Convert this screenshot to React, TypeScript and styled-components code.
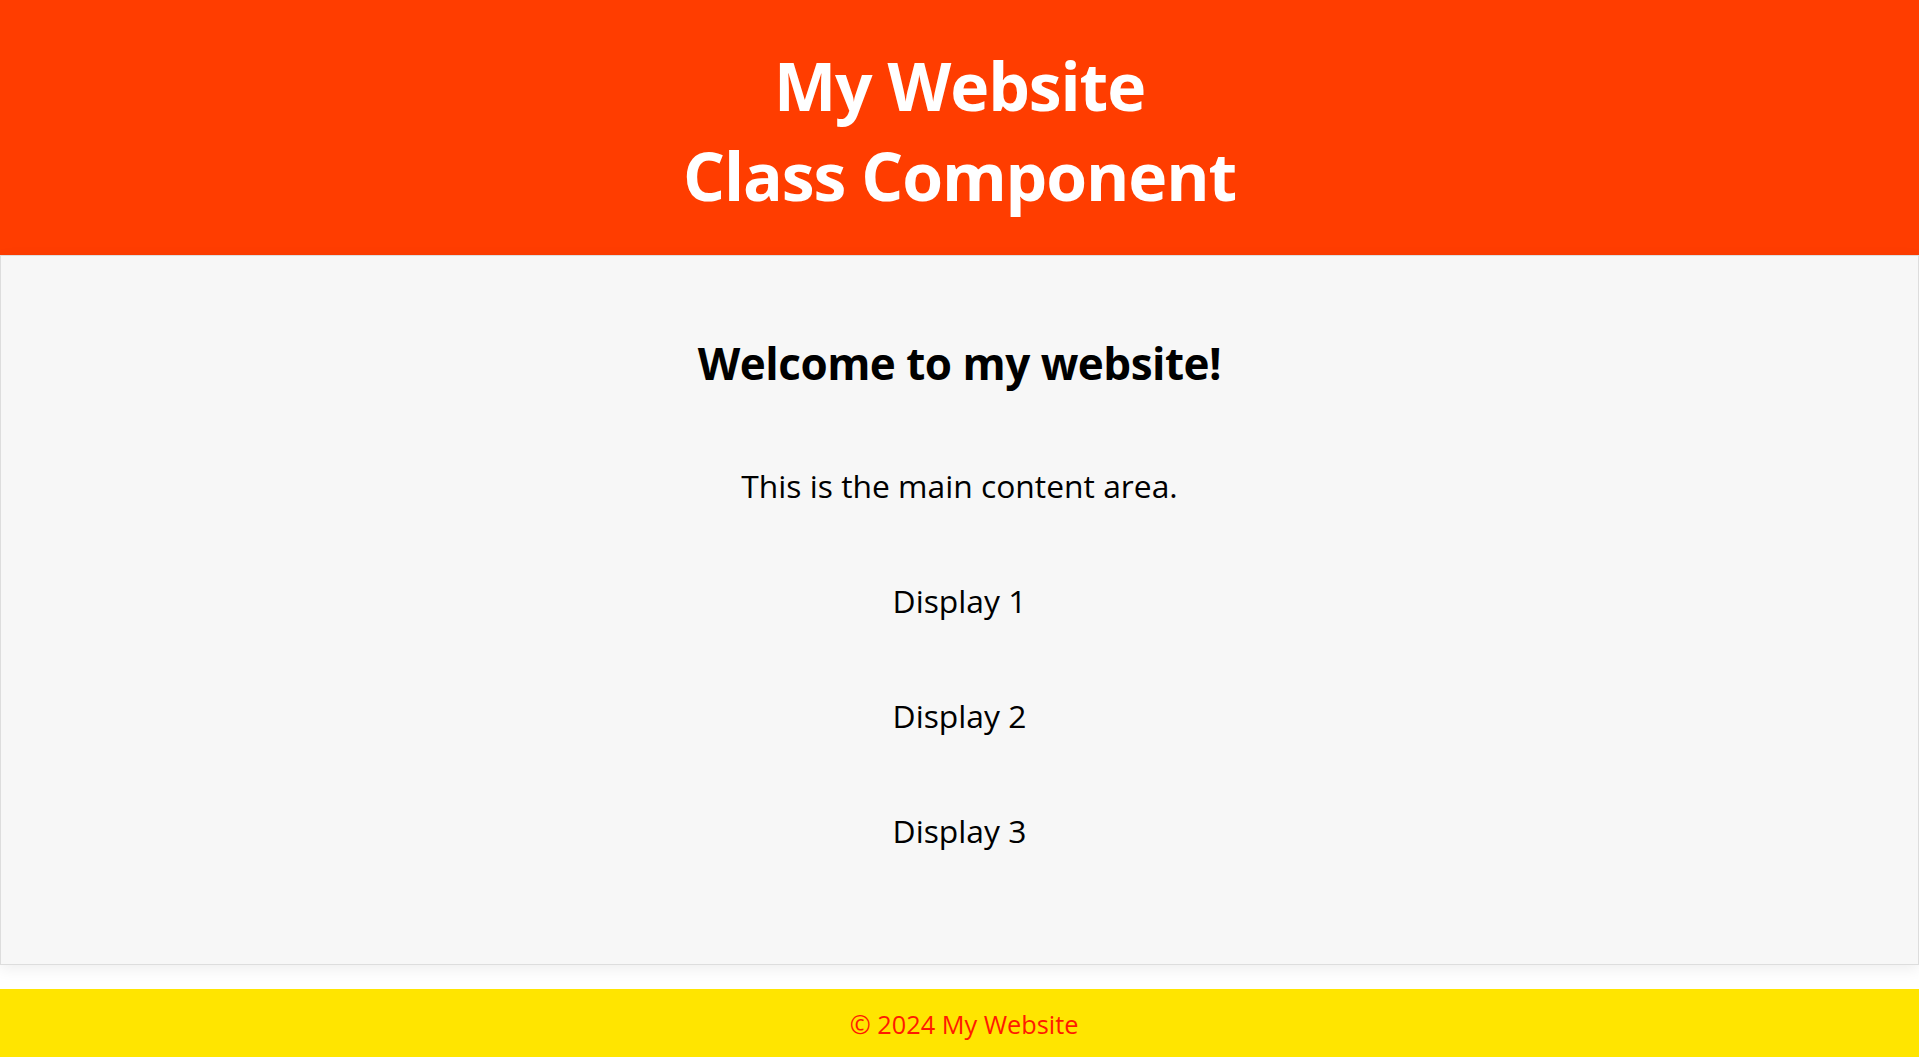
import React from 'react'
import styled, { createGlobalStyle } from 'styled-components'

const GlobalStyle = createGlobalStyle`
  html, body {
    margin: 0;
    padding: 0;
    background: #ffffff;
    font-family: 'Open Sans', 'Noto Sans', sans-serif;
  }
`

const Header = styled.header`
  box-sizing: border-box;
  height: 255px;
  padding: 40px 0 35px;
  background: #ff3d00;
  color: #ffffff;
  text-align: center;
`

const Title = styled.h1`
  margin: 0;
  font-size: 66px;
  font-weight: 700;
  line-height: 90px;
  letter-spacing: -1.1px;
`

const Main = styled.main`
  box-sizing: border-box;
  width: 100%;
  padding: 77px 20px 113px;
  background: #f7f7f7;
  border: 1px solid #dddddd;
  box-shadow: 0 4px 14px rgba(0, 0, 0, 0.07);
  text-align: center;
  color: #000000;
`

const Heading = styled.h2`
  margin: 0 0 73px;
  font-size: 44px;
  font-weight: 700;
  line-height: 60px;
  letter-spacing: -0.5px;
`

const Text = styled.p`
  margin: 0 0 75px;
  font-size: 31.8px;
  line-height: 40px;

  &:last-child {
    margin-bottom: 0;
  }
`

const Footer = styled.footer`
  box-sizing: border-box;
  height: 69px;
  margin-top: 24px;
  padding: 2px 0 0 9px;
  background: #ffe500;
  color: #ff1a00;
  text-align: center;
  font-size: 25.3px;
  line-height: 66px;
`

const displays = ['Display 1', 'Display 2', 'Display 3']

export default function App() {
  return (
    <>
      <GlobalStyle />
      <Header>
        <Title>
          My Website
          <br />
          Class Component
        </Title>
      </Header>
      <Main>
        <Heading>Welcome to my website!</Heading>
        <Text>This is the main content area.</Text>
        {displays.map(d => (
          <Text key={d}>{d}</Text>
        ))}
      </Main>
      <Footer>© 2024 My Website</Footer>
    </>
  )
}
